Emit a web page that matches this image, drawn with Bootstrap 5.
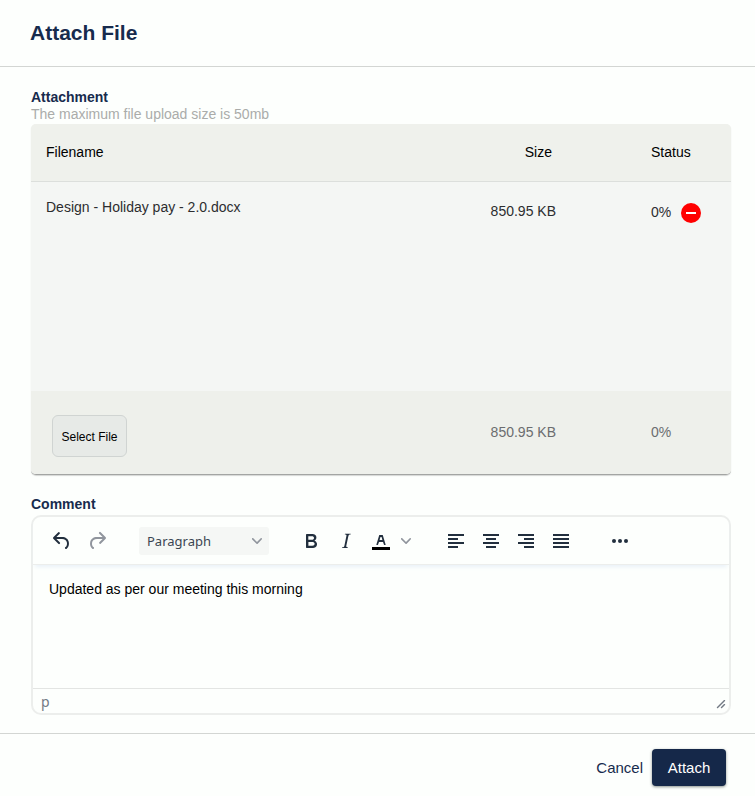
<!DOCTYPE html>
<html lang="en">
<head>
<meta charset="utf-8">
<meta name="viewport" content="width=device-width, initial-scale=1">
<title>Attach File</title>
<link href="https://cdn.jsdelivr.net/npm/bootstrap@5.3.0/dist/css/bootstrap.min.css" rel="stylesheet">
<style>
:root { --navy: #172b4d; --ink: #222f3e; --paper: #fdfffd; --edge: #eceeec; }
body { background: var(--paper); color: #000; font-family: "Liberation Sans", Arial, sans-serif; font-size: 14px; line-height: 17px; }
.dialog-head { padding: 20px 30px; border-bottom: 1px solid #d3d6d3; }
.dialog-title { font-size: 21px; line-height: 26px; font-weight: 700; color: var(--navy); }
.dialog-body { padding: 22px 24px 18px 31px; }
.field-label { font-weight: 700; color: var(--navy); }
.hint { color: #aaacaa; }
.upload { background: #f4f6f4; border-radius: 5px; border-bottom: 1px solid #a3a5a3; box-shadow: 0 1px 1px #d5d7d5; overflow: hidden; margin: 1px 0 21px; }
.upload table { table-layout: fixed; }
.upload th { font-weight: 400; }
.upload thead tr { background: #eff1ec; height: 57px; border-bottom: 1px solid #dcdfdc; }
.upload tfoot tr { background: #eef0eb; height: 83px; color: #6b6d6f; }
.upload tbody tr { height: 210px; color: #2c2d2f; }
.upload td, .upload th { padding: 0 0 0 15px; }
.upload tbody td { padding-top: 17px; vertical-align: top; }
.upload .size-col { width: 160px; padding-right: 78px; text-align: right; }
.upload th.size-col { padding-right: 82px; }
.upload tbody .size-col { padding-top: 21px; }
.upload .status-col { width: 97px; padding-left: 17px; }
.file-status { gap: 10px; }
.remove { width: 20px; height: 20px; }
.select-file { margin: 7px 0 0 6px; height: 42px; width: 75px; padding: 2px 0 0; font-size: 12px; border: 1px solid #d0d4d2; border-radius: 6px; background: #e7eae7; color: #000; }
.editor { border: 2px solid var(--edge); border-radius: 10px; margin-top: 2px; color: var(--ink); font-family: "Noto Sans", sans-serif; }
.toolbar { gap: 25px; padding: 7px 12px 6px; border-bottom: 1px solid var(--edge); box-shadow: 0 4px 4px -2px #e9f1f8; }
.tools { gap: 1px; }
.tool { width: 34px; height: 34px; padding: 0; border: 0; background: none; color: var(--ink); display: flex; align-items: center; justify-content: center; }
.tool:disabled { color: #90959d; }
.tool-arrow { width: 16px; color: #90959d; }
.tool svg, .remove svg, .grip { fill: currentColor; display: block; }
.block-format { width: 130px; height: 28px; }
.block-format select { appearance: none; width: 100%; height: 28px; border: 0; border-radius: 3px; background: #f5f7f5; color: #3b4552; padding: 0 8px; font-size: 13px; }
.block-format svg { right: 7px; top: 9px; fill: #90959d; pointer-events: none; }
.comment-text { height: 123px; padding: 16px; border: 0; outline: 0; resize: none; background: none; color: #000; font: 14px/17px "Liberation Sans", Arial, sans-serif; }
.statusbar { height: 25px; padding: 0 3px 0 8px; border-top: 1px solid #e3e5e3; color: #737a84; }
.dialog-foot { border-top: 1px solid #d3d6d3; padding: 15px 29px 9px; gap: 9px; }
.dialog-foot button { font-size: 15px; line-height: 17px; height: 37px; border: 0; }
.cancel { background: none; padding: 0; color: var(--navy); }
.attach { background: #152849; color: #fff; width: 74px; padding: 0; border-radius: 4px; box-shadow: 0 1px 3px #88908c; }
</style>
<script src="https://cdn.jsdelivr.net/npm/bootstrap@5.3.0/dist/js/bootstrap.bundle.min.js"></script>
</head>
<body>
<header class="dialog-head"><h1 class="dialog-title m-0">Attach File</h1></header>
<main class="dialog-body">
  <div class="field-label">Attachment</div>
  <div class="hint" id="hint">The maximum file upload size is 50mb</div>
  <div class="upload">
    <table class="w-100" aria-describedby="hint">
      <thead><tr><th scope="col">Filename</th><th scope="col" class="size-col">Size</th><th scope="col" class="status-col">Status</th></tr></thead>
      <tbody><tr>
        <td>Design - Holiday pay - 2.0.docx</td>
        <td class="size-col">850.95 KB</td>
        <td class="status-col"><div class="file-status d-flex align-items-center mt-1"><span>0%</span>
          <button type="button" class="remove btn p-0 border-0" aria-label="Remove file"><svg width="20" height="20" viewBox="0 0 20 20"><circle cx="10" cy="10" r="10" fill="#f00"/><path d="M5 9h10v2H5z" fill="#fff"/></svg></button></div></td>
      </tr></tbody>
      <tfoot><tr>
        <td><button type="button" class="select-file">Select File</button></td>
        <td class="size-col">850.95 KB</td>
        <td class="status-col">0%</td>
      </tr></tfoot>
    </table>
  </div>
  <label class="field-label d-block" for="comment">Comment</label>
  <div class="editor">
    <div class="toolbar d-flex flex-wrap align-items-center">
      <div class="tools d-flex">
        <button type="button" class="tool" aria-label="Undo"><svg width="24" height="24"><path d="M6.4 8H12c3.7 0 6.2 2 6.8 5.1.6 2.7-.4 5.6-2.3 6.8a1 1 0 0 1-1-1.8c1.1-.6 1.8-2.7 1.4-4.6-.5-2.1-2.1-3.5-4.9-3.5H6.4l3.3 3.3a1 1 0 1 1-1.4 1.4l-5-5a1 1 0 0 1 0-1.4l5-5a1 1 0 0 1 1.4 1.4L6.4 8Z"/></svg></button>
        <button type="button" class="tool" aria-label="Redo" disabled><svg width="24" height="24"><path d="M17.6 10H12c-2.8 0-4.4 1.4-4.9 3.5-.4 2 .3 4 1.4 4.6a1 1 0 1 1-1 1.8c-2-1.2-2.9-4.1-2.3-6.8.6-3 3-5.1 6.8-5.1h5.6l-3.3-3.3a1 1 0 1 1 1.4-1.4l5 5a1 1 0 0 1 0 1.4l-5 5a1 1 0 0 1-1.4-1.4l3.3-3.3Z"/></svg></button>
      </div>
      <div class="block-format position-relative">
        <select aria-label="Block format"><option>Paragraph</option><option>Heading 1</option><option>Heading 2</option></select>
        <svg class="position-absolute" width="10" height="10"><path d="M8.7 2.2c.3-.3.8-.3 1 0 .4.4.4.9 0 1.2L5.7 7.8c-.3.3-.9.3-1.2 0L.2 3.4a.8.8 0 0 1 0-1.2c.3-.3.8-.3 1.1 0L5 6l3.7-3.8Z"/></svg>
      </div>
      <div class="tools d-flex">
        <button type="button" class="tool" aria-label="Bold"><svg width="24" height="24"><path d="M7.8 19c-.3 0-.5 0-.6-.2l-.2-.5V5.7c0-.2 0-.4.2-.5l.6-.2h5c1.5 0 2.7.3 3.5 1 .7.6 1.1 1.4 1.1 2.5a3 3 0 0 1-.6 1.9c-.4.6-1 1-1.6 1.2.4.1.9.3 1.3.6s.8.7 1 1.2c.4.4.5 1 .5 1.6 0 1.3-.4 2.3-1.3 3-.8.7-2.1 1-3.8 1H7.8Zm5-8.3c.6 0 1.2-.1 1.6-.5.4-.3.6-.7.6-1.3 0-1.1-.8-1.7-2.3-1.7H9.3v3.5h3.4Zm.5 6c.7 0 1.3-.1 1.7-.4.4-.4.6-.9.6-1.5s-.2-1-.7-1.4c-.4-.3-1-.4-2-.4H9.4v3.8h4Z"/></svg></button>
        <button type="button" class="tool" aria-label="Italic"><svg width="24" height="24"><path d="m16.7 4.7-.1.9h-.3c-.6 0-1 0-1.4.3-.3.3-.4.6-.5 1.1l-2.1 9.8v.6c0 .5.4.8 1.4.8h.2l-.2.8H8l.2-.8h.2c1.1 0 1.8-.5 2-1.5l2-9.8.1-.5c0-.6-.4-.8-1.4-.8h-.3l.2-.9h5.8Z"/></svg></button>
        <div class="d-flex">
          <button type="button" class="tool" aria-label="Text colour"><svg width="24" height="24"><path fill="#000" d="M3 18h18v3H3z"/><path d="M8.7 16h-.8a.5.5 0 0 1-.5-.6l2.7-9c.1-.3.3-.4.5-.4h2.8c.2 0 .4.1.5.4l2.7 9a.5.5 0 0 1-.5.6h-.8a.5.5 0 0 1-.4-.4l-.7-2.2c0-.3-.3-.4-.5-.4h-3.4c-.2 0-.4.1-.5.4l-.7 2.2c0 .3-.2.4-.4.4Zm2.6-7.6-.6 2a.5.5 0 0 0 .5.6h1.6a.5.5 0 0 0 .5-.6l-.6-2c0-.3-.3-.4-.5-.4h-.4c-.2 0-.4.1-.5.4Z"/></svg></button>
          <button type="button" class="tool tool-arrow" aria-label="Choose text colour"><svg width="10" height="10"><path d="M8.7 2.2c.3-.3.8-.3 1 0 .4.4.4.9 0 1.2L5.7 7.8c-.3.3-.9.3-1.2 0L.2 3.4a.8.8 0 0 1 0-1.2c.3-.3.8-.3 1.1 0L5 6l3.7-3.8Z"/></svg></button>
        </div>
      </div>
      <div class="tools d-flex">
        <button type="button" class="tool" aria-label="Align left"><svg width="24" height="24"><path d="M4 5h16v2H4zM4 9h10v2H4zM4 13h16v2H4zM4 17h10v2H4z"/></svg></button>
        <button type="button" class="tool" aria-label="Align centre"><svg width="24" height="24"><path d="M4 5h16v2H4zM7 9h10v2H7zM4 13h16v2H4zM7 17h10v2H7z"/></svg></button>
        <button type="button" class="tool" aria-label="Align right"><svg width="24" height="24"><path d="M4 5h16v2H4zM10 9h10v2H10zM4 13h16v2H4zM10 17h10v2H10z"/></svg></button>
        <button type="button" class="tool" aria-label="Justify"><svg width="24" height="24"><path d="M4 5h16v2H4zM4 9h16v2H4zM4 13h16v2H4zM4 17h16v2H4z"/></svg></button>
      </div>
      <button type="button" class="tool" aria-label="More tools"><svg width="24" height="24"><circle cx="6" cy="12" r="2"/><circle cx="12" cy="12" r="2"/><circle cx="18" cy="12" r="2"/></svg></button>
    </div>
    <textarea id="comment" class="comment-text d-block w-100">Updated as per our meeting this morning</textarea>
    <div class="statusbar d-flex align-items-center justify-content-between"><span>p</span>
      <svg class="grip align-self-end mb-1" width="10" height="10" viewBox="0 0 10 10"><path d="M8.1 1.1A.5.5 0 1 1 9 2l-7 7A.5.5 0 1 1 1 8l7-7ZM8.1 5.1A.5.5 0 1 1 9 6l-3 3A.5.5 0 1 1 5 8l3-3Z"/></svg></div>
  </div>
</main>
<footer class="dialog-foot d-flex justify-content-end">
  <button type="button" class="cancel">Cancel</button>
  <button type="button" class="attach">Attach</button>
</footer>
</body>
</html>
